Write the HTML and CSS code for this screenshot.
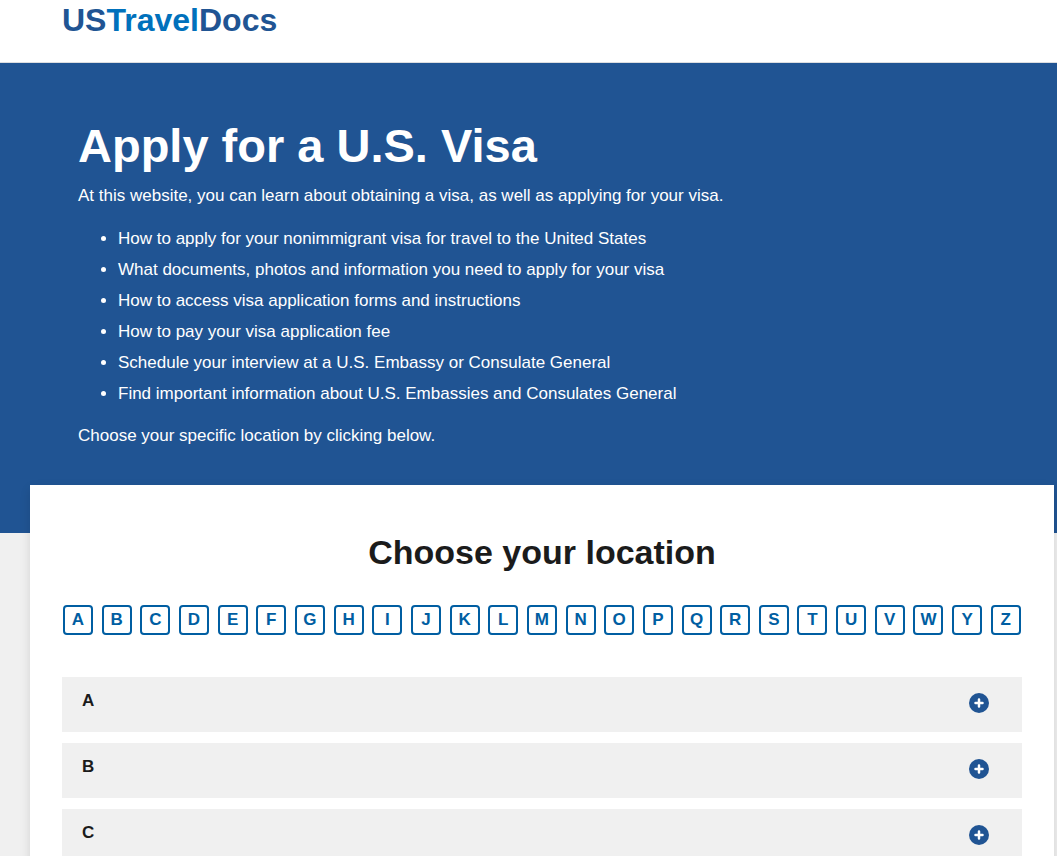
FILE: index.html
```html
<!DOCTYPE html>
<html lang="en">
  <head>
    <meta charset="UTF-8" />
    <meta name="viewport" content="width=device-width, initial-scale=1.0" />
    <title>USTravelDocs</title>
    <link rel="stylesheet" href="styles.css">
  </head>
  <body>
    <header class="site-header">
      <a class="logo" href="#">US<span>Travel</span>Docs</a>
    </header>

    <main>
      <section class="hero">
        <h1>Apply for a U.S. Visa</h1>
        <p>At this website, you can learn about obtaining a visa, as well as applying for your visa.</p>
        <ul>
          <li>How to apply for your nonimmigrant visa for travel to the United States</li>
          <li>What documents, photos and information you need to apply for your visa</li>
          <li>How to access visa application forms and instructions</li>
          <li>How to pay your visa application fee</li>
          <li>Schedule your interview at a U.S. Embassy or Consulate General</li>
          <li>Find important information about U.S. Embassies and Consulates General</li>
        </ul>
        <p>Choose your specific location by clicking below.</p>
      </section>

      <section class="locations">
        <h2>Choose your location</h2>
        <nav class="letters">
          <a href="#a">A</a>
          <a href="#b">B</a>
          <a href="#c">C</a>
          <a href="#d">D</a>
          <a href="#e">E</a>
          <a href="#f">F</a>
          <a href="#g">G</a>
          <a href="#h">H</a>
          <a href="#i">I</a>
          <a href="#j">J</a>
          <a href="#k">K</a>
          <a href="#l">L</a>
          <a href="#m">M</a>
          <a href="#n">N</a>
          <a href="#o">O</a>
          <a href="#p">P</a>
          <a href="#q">Q</a>
          <a href="#r">R</a>
          <a href="#s">S</a>
          <a href="#t">T</a>
          <a href="#u">U</a>
          <a href="#v">V</a>
          <a href="#w">W</a>
          <a href="#y">Y</a>
          <a href="#z">Z</a>
        </nav>

        <div class="accordion">
          <button type="button" id="a">
            A
            <svg class="plus" viewBox="0 0 20 20" aria-hidden="true">
              <circle cx="10" cy="10" r="10" />
              <path d="M10 6.5v7M6.5 10h7" />
            </svg>
          </button>
          <button type="button" id="b">
            B
            <svg class="plus" viewBox="0 0 20 20" aria-hidden="true">
              <circle cx="10" cy="10" r="10" />
              <path d="M10 6.5v7M6.5 10h7" />
            </svg>
          </button>
          <button type="button" id="c">
            C
            <svg class="plus" viewBox="0 0 20 20" aria-hidden="true">
              <circle cx="10" cy="10" r="10" />
              <path d="M10 6.5v7M6.5 10h7" />
            </svg>
          </button>
        </div>
      </section>
    </main>
  </body>
</html>
```

FILE: styles.css
```css
* {
  margin: 0;
  padding: 0;
  box-sizing: border-box;
}

body {
  background: #f0f0f0;
  color: #1b1b1b;
  font-family: "Liberation Sans", Arial, sans-serif;
  font-size: 17px;
  line-height: 27px;
}

/* header */
.site-header {
  padding: 0 62px 22px;
  background: #fff;
  border-bottom: 1px solid #dcdee0;
}

.logo {
  display: block;
  color: #205493;
  font-size: 32px;
  font-weight: bold;
  line-height: 40px;
  text-decoration: none;
}

.logo span {
  color: #0071bc;
}

/* intro */
.hero {
  padding: 54px 78px 84px;
  background: #205493;
  color: #fff;
}

.hero h1 {
  margin-bottom: 8px;
  font-size: 47px;
  line-height: 57px;
}

.hero ul {
  margin: 16px 0 15px;
  padding-left: 40px;
}

.hero li {
  margin-bottom: 4px;
}

/* location card, pulled up over the intro */
.locations {
  position: relative;
  max-width: 1024px;
  margin: -48px 3px 0 30px;
  padding: 40px 32px;
  background: #fff;
  box-shadow: 0 4px 10px rgba(0, 0, 0, 0.12);
}

.locations h2 {
  font-size: 34px;
  line-height: 54px;
  text-align: center;
}

.letters {
  display: flex;
  justify-content: space-between;
  margin: 26px 0 42px;
  padding: 0 1px;
}

.letters a {
  width: 30px;
  height: 30px;
  border: 2px solid #005ea2;
  border-radius: 4px;
  color: #005ea2;
  font-weight: bold;
  line-height: 26px;
  text-align: center;
  text-decoration: none;
}

.accordion {
  display: grid;
  gap: 11px;
}

.accordion button {
  display: flex;
  justify-content: space-between;
  padding: 10px 33px 18px 20px;
  border: 0;
  background: #f0f0f0;
  color: #1b1b1b;
  font: bold 17px/27px "Liberation Sans", Arial, sans-serif;
  cursor: pointer;
}

.plus {
  width: 20px;
  height: 20px;
  margin-top: 6px;
}

.plus circle {
  fill: #205493;
}

.plus path {
  stroke: #fff;
  stroke-width: 2.5;
  stroke-linecap: round;
}
```
